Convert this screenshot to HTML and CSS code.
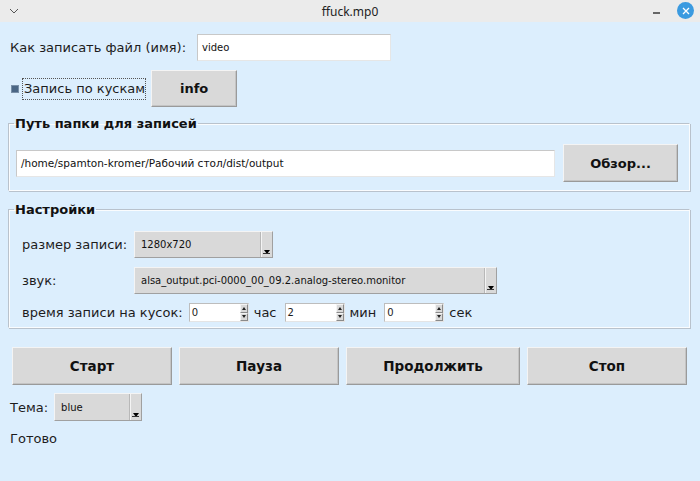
FILE: index.html
```html
<!DOCTYPE html>
<html lang="ru">
<head>
<meta charset="utf-8">
<title>ffuck.mp0</title>
<link rel="stylesheet" href="styles.css">
</head>
<body>
<div class="window">
  <div class="titlebar">
    <svg class="chev" width="10" height="6" viewBox="0 0 10 6"><path d="M1 1 L5 5 L9 1" fill="none" stroke="#555" stroke-width="1"/></svg>
    <span class="title">ffuck.mp0</span>
    <span class="minbtn"></span>
    <span class="closebtn"><svg width="10" height="10" viewBox="0 0 10 10"><path d="M2 2 L8 8 M8 2 L2 8" stroke="#fff" stroke-width="1.3"/></svg></span>
  </div>
  <div class="content">
    <div class="row row-name">
      <span class="lbl">Как записать файл (имя):</span>
      <div class="entry entry-name">video</div>
    </div>
    <div class="row row-chunk">
      <span class="check"></span>
      <span class="checklabel">Запись по кускам</span>
      <div class="btn btn-info">info</div>
    </div>
    <fieldset class="group group-path">
      <legend>Путь папки для записей</legend>
      <div class="row path-row">
        <div class="entry entry-path">/home/spamton-kromer/Рабочий стол/dist/output</div>
        <div class="btn btn-browse">Обзор...</div>
      </div>
    </fieldset>
    <fieldset class="group group-settings">
      <legend>Настройки</legend>
      <div class="settings-inner">
        <div class="row set-row">
          <span class="lbl lbl-set">размер записи:</span>
          <div class="combo combo-size"><span class="ctext">1280x720</span><span class="carrow"><i></i></span></div>
        </div>
        <div class="row set-row">
          <span class="lbl lbl-set">звук:</span>
          <div class="combo combo-sound"><span class="ctext">alsa_output.pci-0000_00_09.2.analog-stereo.monitor</span><span class="carrow"><i></i></span></div>
        </div>
        <div class="row time-row">
          <span class="lbl">время записи на кусок:</span>
          <div class="spin"><span class="stext">0</span><span class="sarrows"><i class="up"></i><i class="down"></i></span></div>
          <span class="lbl">час</span>
          <div class="spin"><span class="stext">2</span><span class="sarrows"><i class="up"></i><i class="down"></i></span></div>
          <span class="lbl">мин</span>
          <div class="spin"><span class="stext">0</span><span class="sarrows"><i class="up"></i><i class="down"></i></span></div>
          <span class="lbl">сек</span>
        </div>
      </div>
    </fieldset>
    <div class="row actions">
      <div class="btn btn-act">Старт</div>
      <div class="btn btn-act">Пауза</div>
      <div class="btn btn-act wide">Продолжить</div>
      <div class="btn btn-act">Стоп</div>
    </div>
    <div class="row theme-row">
      <span class="lbl">Тема:</span>
      <div class="combo combo-theme"><span class="ctext">blue</span><span class="carrow"><i></i></span></div>
    </div>
    <div class="status">Готово</div>
  </div>
</div>
</body>
</html>
```
FILE: styles.css
```css
html, body {
  margin: 0;
  padding: 0;
  background: #dceefd;
}
.window {
  width: 700px;
  height: 481px;
  background: #dceefd;
  font-family: "DejaVu Sans", sans-serif;
  font-size: 13px;
  color: #1c1c1c;
  overflow: hidden;
}
.titlebar {
  height: 22px;
  background: #ebebeb;
  display: flex;
  align-items: center;
  position: relative;
}
.chev {
  margin-left: 9px;
  flex-shrink: 0;
}
.title {
  position: absolute;
  left: 0;
  right: 0;
  text-align: center;
  font-family: "Noto Sans", sans-serif;
  font-size: 12px;
  color: #222;
  top: 3px;
}
.minbtn {
  margin-left: auto;
  width: 7px;
  height: 2px;
  background: #666;
  margin-top: 4px;
  margin-right: 17px;
  flex-shrink: 0;
}
.closebtn {
  position: relative;
  flex-shrink: 0;
  width: 17px;
  height: 17px;
  border-radius: 50%;
  background: #3a9ae0;
  margin-right: 6px;
  margin-top: -1px;
  display: flex;
  align-items: center;
  justify-content: center;
}
.row {
  display: flex;
  align-items: center;
}
.lbl {
  white-space: nowrap;
}
.row-name {
  margin: 12px 0 0 10px;
  height: 27px;
}
.entry {
  background: #fff;
  border: 1px solid #e6e6e6;
  border-top-color: #c8c8c8;
  border-left-color: #c8c8c8;
  box-sizing: border-box;
  font-size: 10px;
  color: #111;
  padding-left: 4px;
  display: flex;
  align-items: center;
  white-space: nowrap;
}
.entry-name {
  margin-left: 11px;
  width: 194px;
  height: 27px;
}
.row-chunk {
  margin: 9px 0 0 11px;
  height: 37px;
}
.check {
  width: 6px;
  height: 6px;
  background: #4a6685;
  border: 1px solid #7a90a8;
  margin-top: 1px;
  flex-shrink: 0;
}
.checklabel {
  margin-left: 3px;
  border: 1px dotted #555;
  padding: 0 0 0 1px;
  height: 20px;
  line-height: 20px;
  white-space: nowrap;
}
.btn {
  background: #d9d9d9;
  border: 1px solid;
  border-color: #f4f4f4 #9a9a9a #9a9a9a #f4f4f4;
  box-shadow: inset -1px -1px 0 #c4c4c4;
  box-sizing: border-box;
  font-weight: bold;
  font-size: 13px;
  color: #111;
  display: flex;
  align-items: center;
  justify-content: center;
  flex-shrink: 0;
}
.btn-info {
  margin-left: 5px;
  width: 86px;
  height: 37px;
}
.group {
  margin: 0 10px 0 8px;
  border-style: solid;
  border-width: 1px;
  border-color: #b9c2cc #fafcfe #fafcfe #b9c2cc;
  box-shadow: inset 1px 1px 0 #fafcfe, 1px 1px 0 #b9c2cc;
  padding: 0;
  min-width: 0;
}
.group legend {
  font-weight: bold;
  font-size: 13px;
  color: #111;
  padding: 0 1px;
  margin-left: 5px;
}
.group-path {
  margin-top: 9px;
  padding: 13px 11px 8px 7px;
}
.group-path legend {
  margin-left: -2px;
}
.path-row {
  justify-content: space-between;
}
.entry-path {
  width: 539px;
  height: 27px;
  font-size: 10.5px;
}
.btn-browse {
  width: 115px;
  height: 38px;
  font-size: 13px;
}
.group-settings {
  margin-top: 11px;
  padding: 0;
}
.settings-inner {
  padding: 14px 0 5px 13px;
}
.set-row {
  height: 27px;
  margin-bottom: 9px;
}
.lbl-set {
  width: 112px;
}
.combo {
  background: #d9d9d9;
  border: 1px solid;
  border-color: #f4f4f4 #a0a0a0 #a0a0a0 #f4f4f4;
  box-sizing: border-box;
  height: 27px;
  display: flex;
  font-size: 10px;
  color: #111;
  flex-shrink: 0;
}
.ctext {
  flex: 1;
  display: flex;
  align-items: center;
  padding-left: 6px;
  white-space: nowrap;
  overflow: hidden;
}
.carrow {
  width: 10px;
  border-left: 1px solid #f4f4f4;
  box-shadow: -1px 0 0 #b8b8b8;
  position: relative;
}
.carrow i {
  position: absolute;
  bottom: 3px;
  left: 2px;
  width: 0;
  height: 0;
  border-left: 3px solid transparent;
  border-right: 3px solid transparent;
  border-top: 4px solid #000;
}
.carrow i::after {
  content: "";
  position: absolute;
  left: -4px;
  top: -1px;
  width: 7px;
  height: 1px;
  background: #333;
}
.combo-size {
  width: 139px;
}
.combo-sound {
  width: 363px;
}
.time-row {
  height: 19px;
  margin-top: 1px;
}
.spin {
  width: 60px;
  height: 19px;
  background: #fff;
  border: 1px solid #e4e4e4;
  border-top-color: #bdbdbd;
  border-left-color: #bdbdbd;
  box-sizing: border-box;
  display: flex;
  font-size: 10px;
  margin: 0 5px 0 8px;
  flex-shrink: 0;
}
.time-row .spin:first-of-type {
  margin-left: 6px;
}
.stext {
  flex: 1;
  padding-left: 2px;
  display: flex;
  align-items: center;
}
.sarrows {
  width: 8px;
  display: flex;
  flex-direction: column;
  background: #d9d9d9;
}
.sarrows i {
  flex: 1;
  position: relative;
  border: 1px solid;
  border-color: #f4f4f4 #8a8a8a #8a8a8a #f4f4f4;
}
.sarrows i::after {
  content: "";
  position: absolute;
  left: 1px;
  top: 2px;
  border-left: 2px solid transparent;
  border-right: 2px solid transparent;
}
.sarrows i.up::after {
  border-bottom: 3px solid #222;
}
.sarrows i.down::after {
  top: 1px;
  border-top: 3px solid #222;
}
.actions {
  margin: 19px 0 0 12px;
  gap: 7px;
}
.btn-act {
  width: 160px;
  height: 38px;
  font-size: 13.5px;
}
.btn-act.wide {
  width: 174px;
}
.theme-row {
  margin: 8px 0 0 10px;
}
.combo-theme {
  width: 88px;
  height: 28px;
  margin-left: 6px;
}
.status {
  margin: 10px 0 0 10px;
}
```
